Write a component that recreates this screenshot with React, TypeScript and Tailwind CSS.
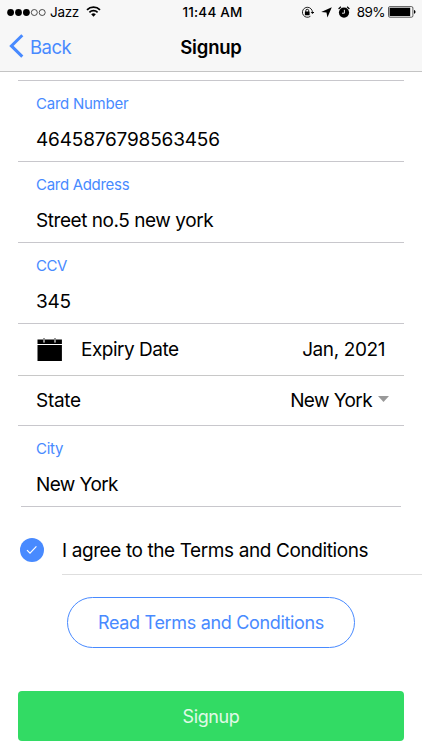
import React, { useState } from "react";

// --- 1. Data ---
const CARD_FIELDS = [
  { label: "Card Number", value: "4645876798563456", labelTracking: "tracking-[-0.25px]", valueTracking: "tracking-[-0.18px]" },
  { label: "Card Address", value: "Street no.5 new york", labelTracking: "tracking-[-0.3px]", valueTracking: "tracking-[-0.45px]" },
  { label: "CCV", value: "345", labelTracking: "tracking-[-0.4px]", valueTracking: "tracking-[-0.3px]" },
];

// --- 2. Status Bar ---
const StatusBar = () => (
  <div className="grid h-[23px] grid-cols-[1fr_auto_1fr] items-center pt-px text-[13.5px] leading-[22px] text-black">
    <div className="flex items-center pl-[7px]">
      <svg width="39" height="9" viewBox="0 0 39 9">
        <circle cx="3.6" cy="4.5" r="3.4" />
        <circle cx="11.5" cy="4.5" r="3.4" />
        <circle cx="19.4" cy="4.5" r="3.4" />
        <circle cx="27.3" cy="4.5" r="3" fill="none" stroke="#222" strokeWidth="0.8" />
        <circle cx="35.2" cy="4.5" r="3" fill="none" stroke="#222" strokeWidth="0.8" />
      </svg>
      <span className="ml-1 tracking-[-0.3px]">Jazz</span>
      <svg className="mb-px ml-[7px]" width="15" height="11" viewBox="0 0 15 11">
        <path d="M1 3.8a9.4 9.4 0 0 1 13 0" fill="none" stroke="#000" strokeWidth="1.8" />
        <path d="M3.4 6.3a6 6 0 0 1 8.2 0" fill="none" stroke="#000" strokeWidth="1.7" />
        <path d="M7.5 10.8 5.2 8.3a3.4 3.4 0 0 1 4.6 0z" />
      </svg>
    </div>
    <span className="pl-[3px] font-medium tracking-[0.2px]">11:44 AM</span>
    <div className="flex items-center justify-end pr-[6px]">
      <svg width="13" height="13" viewBox="0 0 13 13">
        <path d="M10.2 3A5 5 0 1 0 9.4 10.3M10.2 3a5 5 0 0 1 1.2 3.6" fill="none" stroke="#111" strokeWidth="0.9" />
        <path d="M9.7 6.1h3.4l-1.7 2z" />
        <rect x="3.9" y="5.6" width="4.7" height="3.6" rx="0.3" />
        <path d="M4.8 6V4.7a1.45 1.45 0 0 1 2.9 0V6" fill="none" stroke="#000" strokeWidth="0.9" />
      </svg>
      <svg className="ml-[7px]" width="11" height="11" viewBox="0 0 11 11">
        <path d="M10.8.2 6.4 10.6 5.5 5.5.2 4.9z" />
      </svg>
      <svg className="ml-[6px]" width="12" height="12" viewBox="0 0 12 12">
        <circle cx="6" cy="6.6" r="5.1" />
        <path d="M.6 3 2.9.8M11.4 3 9.1.8" stroke="#000" strokeWidth="1.2" fill="none" />
        <path d="M6.4 3.8v3.4H4" fill="none" stroke="#fff" strokeWidth="0.9" />
      </svg>
      <span className="ml-[7px] tracking-[-0.6px]">89%</span>
      <svg className="ml-[3px]" width="28" height="12" viewBox="0 0 28 12">
        <rect x="0.5" y="0.6" width="24.4" height="10.6" rx="1.4" fill="none" stroke="#333" strokeWidth="0.8" />
        <rect x="1.6" y="1.7" width="20.6" height="8.4" rx="0.4" />
        <path d="M26 4c2 .4 2 3.4 0 3.8z" />
      </svg>
    </div>
  </div>
);

// --- 3. Nav Bar ---
const NavBar = () => (
  <nav className="grid h-[49px] grid-cols-[1fr_auto_1fr] items-center border-b border-[#c4c4c4]">
    <button className="flex items-center pl-[9px] text-left text-[18.5px] leading-[24px] tracking-[-0.5px] text-[#488aff]">
      <svg className="mb-[2px]" width="15" height="24" viewBox="0 0 15 24">
        <path d="M13.3 1.2 2.4 11.9l10.9 10.7" fill="none" stroke="#488aff" strokeWidth="3" />
      </svg>
      <span className="ml-[6px]">Back</span>
    </button>
    <h1 className="text-[18.5px] font-semibold leading-[24px] tracking-[-0.2px] text-black">Signup</h1>
  </nav>
);

// --- 4. Stacked Field ---
interface FieldProps {
  label: string;
  value: string;
  labelTracking?: string;
  valueTracking?: string;
}

const Field: React.FC<FieldProps> = ({ label, value, labelTracking = "", valueTracking = "" }) => (
  <div className="h-[80px] pl-[18px] pt-[13px]">
    <div className={`text-[15px] leading-[20px] text-[#488aff] ${labelTracking}`}>{label}</div>
    <div className={`mt-[13px] text-[19px] leading-[26px] text-black ${valueTracking}`}>{value}</div>
  </div>
);

const CalendarIcon = () => (
  <svg width="26" height="24" viewBox="0 0 26 24">
    <path d="M.5 1.5h24.4V6H.5zM.5 7h24.4v16H.5z" />
    <path d="M7 0v4.4M18 0v4.4" stroke="#bbb" strokeWidth="1.8" />
    <path d="M7 0v3.6M18 0v3.6" stroke="#444" strokeWidth="0.7" />
  </svg>
);

// --- 5. Page ---
const App = () => {
  const [agreed, setAgreed] = useState(true);

  return (
    <div className="flex h-[750px] w-[422px] flex-col overflow-hidden bg-white font-['Inter','Liberation_Sans',sans-serif]">
      <header className="bg-[#f7f7f7]">
        <StatusBar />
        <NavBar />
      </header>

      <main className="pt-2">
        <div className="mx-[18px] border-t border-[#c8c7cc]">
          {CARD_FIELDS.map((f) => (
            <div key={f.label} className="border-b border-[#c8c7cc]">
              <Field {...f} />
            </div>
          ))}

          {/* EXPIRY DATE */}
          <div className="flex h-[52px] items-center border-b border-[#c8c8c8] pl-[19px] pr-[19px] pt-px text-[19px] text-black">
            <CalendarIcon />
            <span className="ml-[18px] tracking-[-0.5px]">Expiry Date</span>
            <span className="ml-auto tracking-[-0.4px]">Jan, 2021</span>
          </div>

          {/* STATE */}
          <div className="flex h-[50px] items-center border-b border-[#c8c7cc] pl-[18px] pr-[15px] pt-px text-[19px] text-black">
            <span className="tracking-[-0.3px]">State</span>
            <span className="ml-auto tracking-[-0.6px]">New York</span>
            <svg className="mb-[5px] ml-[6px]" width="11" height="6" viewBox="0 0 11 6">
              <path d="M0 0h11L5.5 6z" fill="#999" />
            </svg>
          </div>

          {/* CITY */}
          <Field label="City" value="New York" labelTracking="tracking-[-0.3px]" valueTracking="tracking-[-0.6px]" />
          <div className="mx-[3px] border-b border-[#c8c7cc]" />
        </div>

        {/* TERMS */}
        <div className="flex h-[68px] pl-5 pt-[19px]">
          <button
            role="checkbox"
            aria-checked={agreed}
            aria-label="Agree"
            onClick={() => setAgreed(!agreed)}
            className={`mt-[12px] flex size-6 items-center justify-center rounded-full ${agreed ? "bg-[#488aff]" : "border border-[#c8c7cc]"}`}
          >
            {agreed && (
              <svg width="12" height="10" viewBox="0 0 12 10">
                <path d="m1 5.2 3 3L10.4 1.4" fill="none" stroke="#fff" strokeWidth="1.2" />
              </svg>
            )}
          </button>
          <div className="ml-[18px] flex-1 border-b border-[#dedede] pt-[12px] text-[19px] leading-[26px] tracking-[-0.4px] text-black">
            I agree to the Terms and Conditions
          </div>
        </div>

        <button className="ml-[67px] mt-[22px] flex h-[51px] w-[288px] items-center justify-center rounded-full border border-[#488aff] text-[18px] tracking-[-0.33px] text-[#488aff]">
          Read Terms and Conditions
        </button>

        <button className="ml-[18px] mt-[43px] flex h-[50px] w-[386px] items-center justify-center rounded-[4px] bg-[#32db64] text-[18px] tracking-[-0.4px] text-white/85">
          Signup
        </button>
      </main>
    </div>
  );
};

export default App;
